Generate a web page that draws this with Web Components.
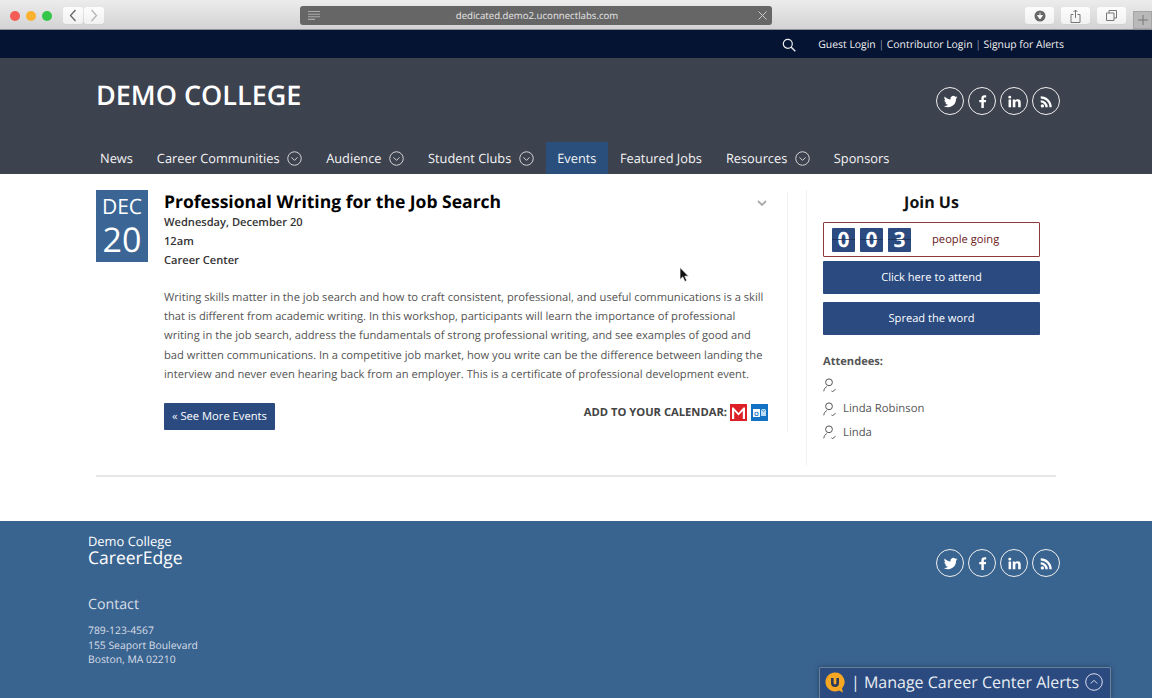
<!DOCTYPE html>
<html>
<head>
<meta charset="utf-8">
<title>Demo College CareerEdge</title>
<style>
  html, body { margin: 0; height: 698px; overflow: hidden; background: #fff; }
  body { position: relative; font-family: "Open Sans", "Liberation Sans", sans-serif; text-rendering: geometricPrecision; }
</style>
</head>
<body>
<window-chrome></window-chrome>
<top-bar></top-bar>
<site-header></site-header>
<main-area></main-area>
<site-footer></site-footer>
<alerts-tab></alerts-tab>
<mouse-pointer></mouse-pointer>

<script>
const ICONS = {
  twitter: '<path fill="currentColor" d="M20 7.2c-.6.3-1.2.4-1.9.5.7-.4 1.2-1 1.4-1.8-.6.4-1.3.6-2 .8a3.2 3.2 0 0 0-5.5 2.9C9.300 9.500 7 8.200 5.400 6.300c-.9 1.500-.4 3.400 1 4.300-.5 0-1-.2-1.400-.4 0 1.600 1.100 2.900 2.600 3.200-.5.100-1 .1-1.500 0 .4 1.300 1.600 2.200 3 2.200A6.500 6.500 0 0 1 4.300 17a9.100 9.100 0 0 0 14-8.100c.7-.4 1.200-1 1.700-1.700z"/>',
  facebook: '<path fill="currentColor" d="M13.500 19.500v-6.600h2.300l.4-2.700h-2.700V8.600c0-.8.2-1.300 1.300-1.300h1.400V4.900c-.3 0-1.100-.1-2-.1-2.100 0-3.500 1.300-3.500 3.500v1.900H8.300v2.700h2.400v6.600z"/>',
  linkedin: '<path fill="currentColor" d="M5.200 9.600h2.900v9H5.200zM6.600 5.300a1.700 1.700 0 1 1 0 3.400 1.700 1.700 0 0 1 0-3.400zM10 9.600h2.800v1.200c.4-.8 1.400-1.500 2.800-1.500 3 0 3.500 1.900 3.500 4.400v4.900h-2.900v-4.400c0-1 0-2.400-1.500-2.400s-1.700 1.100-1.700 2.300v4.500H10z"/>',
  rss: '<circle fill="currentColor" cx="7.300" cy="17" r="1.900"/><path fill="currentColor" d="M5.400 10.600v2.600a5.400 5.400 0 0 1 5.400 5.400h2.600a8 8 0 0 0-8-8z"/><path fill="currentColor" d="M5.400 6v2.600a10 10 0 0 1 10 10H18A12.600 12.600 0 0 0 5.400 6z"/>'
};

// 把模板挂到 shadow root 上
function defineEl(name, html) {
  customElements.define(name, class extends HTMLElement {
    constructor() {
      super();
      this.attachShadow({ mode: 'open' }).innerHTML = html;
    }
  });
}

defineEl('chrome-button', `
  <style>
    :host { display: inline-flex; align-items: center; justify-content: center; width: 29px; height: 17px;
      background: linear-gradient(#fdfdfd, #f1f1f1); border-radius: 3px; box-shadow: 0 1px 0 #d2d2d2; color: #666; }
    svg { display: block; }
  </style>
  <slot></slot>`);

defineEl('window-chrome', `
  <style>
    :host { display: block; height: 30px; box-sizing: border-box; position: relative;
      background: linear-gradient(#ececec, #d3d3d3); border-bottom: 1px solid #8f9298; }
    .bar { display: flex; align-items: center; height: 29px; padding: 1px 0 0 10px; }
    .light { width: 10px; height: 10px; border-radius: 50%; margin-right: 6px; }
    .nav { display: flex; gap: 1px; margin-left: 5px; }
    .nav chrome-button { width: 20px; }
    .url { width: 472px; height: 19px; margin-left: 196px; background: #666; border-radius: 3px; color: #e6e6e6;
      font: 9.650px/19px "Open Sans", sans-serif; display: flex; align-items: center; box-sizing: border-box; padding: 0 5px 0 8px; }
    .url span { flex: 1; text-align: center; padding-right: 4px; }
    .tools { display: flex; gap: 7px; margin-left: 253px; }
    .plus { position: absolute; right: 0; top: 11px; width: 19px; height: 18px; background: #b9b9b9; border: 1px solid #a5a5a5;
      box-sizing: border-box; color: #777; display: flex; align-items: center; justify-content: center; }
  </style>
  <div class="bar">
    <div class="light" style="background:#f45c56"></div>
    <div class="light" style="background:#fbb130"></div>
    <div class="light" style="background:#33c648"></div>
    <div class="nav">
      <chrome-button><svg width="10" height="13" viewBox="0 0 10 13"><path d="M7.500 1 2.500 6.500l5 5.500" fill="none" stroke="#666" stroke-width="1.300"/></svg></chrome-button>
      <chrome-button><svg width="10" height="13" viewBox="0 0 10 13"><path d="M2.500 1l5 5.500-5 5.500" fill="none" stroke="#b5b5b5" stroke-width="1.300"/></svg></chrome-button>
    </div>
    <div class="url">
      <svg width="12" height="9" viewBox="0 0 12 9"><path d="M0 .5h12M0 3.200h12M0 5.800h12M0 8.400h7" stroke="#aaa" stroke-width="1.100"/></svg>
      <span>dedicated.demo2.uconnectlabs.com</span>
      <svg width="9" height="9" viewBox="0 0 9 9"><path d="M.5.500l8 8M8.500.500l-8 8" stroke="#ccc" stroke-width="1"/></svg>
    </div>
    <div class="tools">
      <chrome-button><svg width="12" height="12" viewBox="0 0 12 12"><circle cx="6" cy="6" r="5.500" fill="#666"/><path d="M6 2.500v4M3.500 5.500 6 9l2.500-3.500z" fill="#fff" stroke="#fff" stroke-width=".8"/></svg></chrome-button>
      <chrome-button><svg width="11" height="14" viewBox="0 0 11 14"><path d="M3.500 5.500H1v8h9v-8H7.500M5.500 9V1M3.500 3l2-2 2 2" fill="none" stroke="#777" stroke-width="1"/></svg></chrome-button>
      <chrome-button><svg width="11" height="11" viewBox="0 0 11 11"><path d="M3 3V.5h7.500V8H8M.5 3H8v7.500H.5z" fill="none" stroke="#777" stroke-width="1"/></svg></chrome-button>
    </div>
  </div>
  <div class="plus"><svg width="10" height="10" viewBox="0 0 10 10"><path d="M5 0v10M0 5h10" stroke="#777" stroke-width="1"/></svg></div>`);

defineEl('top-bar', `
  <style>
    :host { display: flex; justify-content: flex-end; align-items: center; height: 28px; box-sizing: border-box; padding: 1px 88px 0 0; background: #061434;
      color: #f2f2f2; font-size: 10.400px; }
    svg { margin-right: 22px; display: block; }
    i { font-style: normal; color: #8b93a6; margin: 0 2.700px; }
  </style>
  <svg width="14" height="14" viewBox="0 0 14 14"><circle cx="5.800" cy="5.800" r="4.500" fill="none" stroke="#eee" stroke-width="1.200"/><path d="M9 9l4.300 4.300" stroke="#eee" stroke-width="1.400"/></svg>
  <span>Guest Login</span><i>|</i><span>Contributor Login</span><i>|</i><span>Signup for Alerts</span>`);

defineEl('social-links', `
  <style>
    :host { display: flex; gap: 4px; color: #fff; }
    a { width: 28px; height: 28px; box-sizing: border-box; border: 1.500px solid #f0f0f0; border-radius: 50%; display: flex; align-items: center; justify-content: center; }
    svg { width: 21px; height: 21px; flex: none; display: block; }
  </style>
  <a><svg viewBox="0 0 24 24">${ICONS.twitter}</svg></a>
  <a><svg viewBox="0 0 24 24">${ICONS.facebook}</svg></a>
  <a><svg viewBox="0 0 24 24">${ICONS.linkedin}</svg></a>
  <a><svg viewBox="0 0 24 24">${ICONS.rss}</svg></a>`);

defineEl('nav-item', `
  <style>
    :host { display: flex; align-items: center; height: 100%; padding: 0 12px; color: #f4f4f4; font-size: 12.800px; gap: 7.500px; }
    :host([active]) { background: #2a4f7c; padding: 0 11.500px; }
    svg { display: none; }
    :host([menu]) svg { display: block; }
  </style>
  <slot></slot>
  <svg width="15" height="15" viewBox="0 0 16 16"><circle cx="8" cy="8" r="7.200" fill="none" stroke="#ddd" stroke-width="1"/><path d="M4.800 6.800 8 10l3.200-3.200" fill="none" stroke="#ddd" stroke-width="1"/></svg>`);

defineEl('site-header', `
  <style>
    :host { display: block; height: 116px; background: #3d424f; padding-left: 96px; padding-right: 92px; box-sizing: border-box; color: #fff; }
    .top { display: flex; justify-content: space-between; height: 84px; }
    h1 { margin: 19px 0 0; font-size: 27px; font-weight: 600; line-height: 36px; letter-spacing: 0; }
    social-links { margin-top: 29px; }
    nav { display: flex; height: 32px; margin-left: -8px; }
  </style>
  <div class="top"><h1>DEMO COLLEGE</h1><social-links></social-links></div>
  <nav>
    <nav-item>News</nav-item>
    <nav-item menu>Career Communities</nav-item>
    <nav-item menu>Audience</nav-item>
    <nav-item menu>Student Clubs</nav-item>
    <nav-item active>Events</nav-item>
    <nav-item>Featured Jobs</nav-item>
    <nav-item menu>Resources</nav-item>
    <nav-item>Sponsors</nav-item>
  </nav>`);

defineEl('date-box', `
  <style>
    :host { display: block; width: 52px; height: 72px; background: #3a6594; color: #fff; text-align: center; flex: none; box-sizing: border-box; padding-top: 3px; }
    div { font-size: 21px; line-height: 28px; }
    div + div { font-size: 34px; line-height: 37px; }
  </style>
  <div>DEC</div><div>20</div>`);

defineEl('event-article', `
  <style>
    :host { display: flex; gap: 16px; width: 692px; height: 240px; box-sizing: border-box; padding-right: 19px; border-right: 1px solid #f0f0f0; color: #444; margin-top: 2px; }
    date-box { margin-top: -2px; }
    .body { flex: 1; min-width: 0; position: relative; margin-top: -2px; }
    h2 { margin: 0; padding-top: 1px; color: #000; font-size: 17.530px; font-weight: 700; line-height: 22px; }
    .meta { font-size: 11.120px; font-weight: 600; line-height: 19.200px; color: #333; }
    p { margin: 17px 0 0; font-size: 11.160px; line-height: 19.300px; color: #555; white-space: nowrap; }
    .chev { position: absolute; right: 1px; top: 10px; }
    .foot { display: flex; justify-content: space-between; align-items: flex-start; margin-top: 18.500px; }
    .more { background: #2a4a80; color: #fff; font-size: 11.200px; padding: 0 8px; height: 27px; line-height: 27px; border-radius: 1px; }
    .cal { display: flex; align-items: center; gap: 3px; font-size: 11.200px; font-weight: 700; color: #444; margin-top: 1px; height: 18px; }
    svg { display: block; }
    .cal svg + svg { margin-left: 1px; }
  </style>
  <date-box></date-box>
  <div class="body">
    <svg class="chev" width="10" height="6" viewBox="0 0 10 6"><path d="M1 1l4 4 4-4" fill="none" stroke="#aaa" stroke-width="1.800"/></svg>
    <h2>Professional Writing for the Job Search</h2>
    <div class="meta">Wednesday, December 20<br>12am<br>Career Center</div>
    <p>Writing skills matter in the job search and how to craft consistent, professional, and useful communications is a skill<br>that is different from academic writing. In this workshop, participants will learn the importance of professional<br>writing in the job search, address the fundamentals of strong professional writing, and see examples of good and<br>bad written communications. In a competitive job market, how you write can be the difference between landing the<br>interview and never even hearing back from an employer. This is a certificate of professional development event.</p>
    <div class="foot">
      <div class="more">« See More Events</div>
      <div class="cal"><span>ADD TO YOUR CALENDAR:</span>
        <svg width="17" height="17" viewBox="0 0 17 17"><rect width="17" height="17" fill="#dd2027"/><path d="M2 15V3.500h1.500L8.500 9l5-5.500H15V15h-2.200V7L8.500 11.500 4.200 7v8z" fill="#fff"/></svg>
        <svg width="17" height="17" viewBox="0 0 17 17"><rect width="17" height="17" fill="#1272c4"/><rect x="2" y="5" width="7" height="8" fill="#fff"/><text x="5.500" y="11.500" font-size="6" font-weight="700" text-anchor="middle" fill="#1272c4" font-family="Open Sans">O</text><path d="M10 5h5v7h-5z" fill="#bcdcf4"/><path d="M10 5l2.500 2.500L15 5" fill="none" stroke="#1272c4" stroke-width=".7"/></svg>
      </div>
    </div>
  </div>`);

defineEl('flip-digit', `
  <style>
    :host { display: block; position: relative; width: 23px; height: 24px; background: #2a4a80; color: #fff; font-size: 21px; font-weight: 700; line-height: 24px; text-align: center; border-radius: 1px; }
    :host::after { content: ""; position: absolute; left: 0; right: 0; top: 11.500px; height: 1px; background: rgba(28, 47, 85, .8); }
  </style>
  <slot></slot>`);

defineEl('attendee-row', `
  <style>
    :host { display: flex; align-items: center; height: 23.700px; gap: 7px; font-size: 11.300px; color: #555; }
    svg { display: block; flex: none; }
  </style>
  <svg width="13" height="14" viewBox="0 0 13 14"><circle cx="6" cy="4.300" r="3.400" fill="none" stroke="#555" stroke-width="1"/><path d="M.8 13.300c.2-2.500 1.600-4 3-4.700M8.500 13l1.200.6L12.500 11.300" fill="none" stroke="#555" stroke-width="1"/></svg>
  <slot></slot>`);

defineEl('join-panel', `
  <style>
    :host { display: block; width: 250px; box-sizing: border-box; padding-left: 16px; border-left: 1px solid #f0f0f0; height: 275px; margin-left: 18px; }
    h3 { margin: 0; text-align: center; font-size: 16px; font-weight: 700; color: #111; line-height: 24px; width: 217px; }
    .count { display: flex; align-items: center; width: 217px; height: 35px; box-sizing: border-box; margin-top: 8px; border: 1px solid #8e3a3a; border-radius: 1px; padding-left: 8px; gap: 5px; }
    .count span { color: #6d1d1d; font-size: 11.200px; margin-left: 16px; }
    .btn { width: 217px; height: 33px; margin-top: 4px; background: #2a4a80; color: #fff; font-size: 11.100px; line-height: 33px; text-align: center; border-radius: 1px; }
    .btn + .btn { margin-top: 8px; line-height: 34px; }
    h4 { margin: 18px 0 0; font-size: 11.100px; font-weight: 700; color: #555; line-height: 18px; }
    .list { margin-top: 2px; }
  </style>
  <h3>Join Us</h3>
  <div class="count">
    <flip-digit>0</flip-digit><flip-digit>0</flip-digit><flip-digit>3</flip-digit>
    <span>people going</span>
  </div>
  <div class="btn">Click here to attend</div>
  <div class="btn">Spread the word</div>
  <h4>Attendees:</h4>
  <div class="list">
    <attendee-row></attendee-row>
    <attendee-row>Linda Robinson</attendee-row>
    <attendee-row>Linda</attendee-row>
  </div>`);

defineEl('main-area', `
  <style>
    :host { display: block; height: 347px; box-sizing: border-box; padding: 16px 96px 0; }
    .cols { display: flex; align-items: flex-start; height: 287px; box-sizing: border-box; border-bottom: 2px solid #e6e6e6; width: 960px; }
  </style>
  <div class="cols"><event-article></event-article><join-panel></join-panel></div>`);

defineEl('site-footer', `
  <style>
    :host { display: flex; justify-content: space-between; height: 177px; box-sizing: border-box; background: #3a6490; color: #fff; padding: 12px 92px 0 88px; }
    .brand { font-size: 12.900px; line-height: 16px; }
    .name { font-size: 17.500px; line-height: 18px; }
    h5 { margin: 28px 0 0; font-weight: 400; font-size: 14.200px; line-height: 20px; color: #d8dee6; }
    address { font-style: normal; margin-top: 9px; font-size: 10.350px; line-height: 14.500px; color: #d8dee6; }
    social-links { margin-top: 16px; }
  </style>
  <div>
    <div class="brand">Demo College</div>
    <div class="name">CareerEdge</div>
    <h5>Contact</h5>
    <address>789-123-4567<br>155 Seaport Boulevard<br>Boston, MA 02210</address>
  </div>
  <social-links></social-links>`);

defineEl('alerts-tab', `
  <style>
    :host { position: absolute; left: 819px; bottom: 0; width: 292px; height: 31px; box-sizing: border-box; background: #2a4a80; color: #e8ecf2;
      border: 1px solid #6d8299; border-bottom: 0; border-radius: 2px 2px 0 0; box-shadow: 0 0 5px rgba(20, 40, 70, .6);
      display: flex; align-items: center; padding: 0 0 2px 5px; font-size: 16px; }
    span { margin-left: 6px; white-space: nowrap; }
    svg { display: block; flex: none; }
    .up { margin-left: 6px; }
  </style>
  <svg width="20" height="21" viewBox="0 0 20 21"><path d="M10 .5a9.500 9.500 0 1 0 4 18.100l4 1.900-1-4A9.500 9.500 0 0 0 10 .5z" fill="#f5a623"/><path d="M6 6v5a4 4 0 0 0 8 0V6h-2.600v5a1.400 1.400 0 0 1-2.800 0V6z" fill="#2a3a5c"/></svg>
  <span>| Manage Career Center Alerts</span>
  <svg class="up" width="18" height="18" viewBox="0 0 18 18"><circle cx="9" cy="9" r="8.300" fill="none" stroke="#dde" stroke-width="1"/><path d="M5.800 10.500 9 7.300l3.200 3.200" fill="none" stroke="#dde" stroke-width="1"/></svg>`);

defineEl('mouse-pointer', `
  <style>
    :host { position: absolute; left: 679px; top: 267px; width: 10px; height: 16px; }
    svg { display: block; }
  </style>
  <svg width="10" height="16" viewBox="0 0 10 16"><path d="M1 .5v12l2.800-2.600 2 4.600 2-.9-2-4.400h3.800z" fill="#111" stroke="#fff" stroke-width=".7"/></svg>`);
</script>
</body>
</html>
